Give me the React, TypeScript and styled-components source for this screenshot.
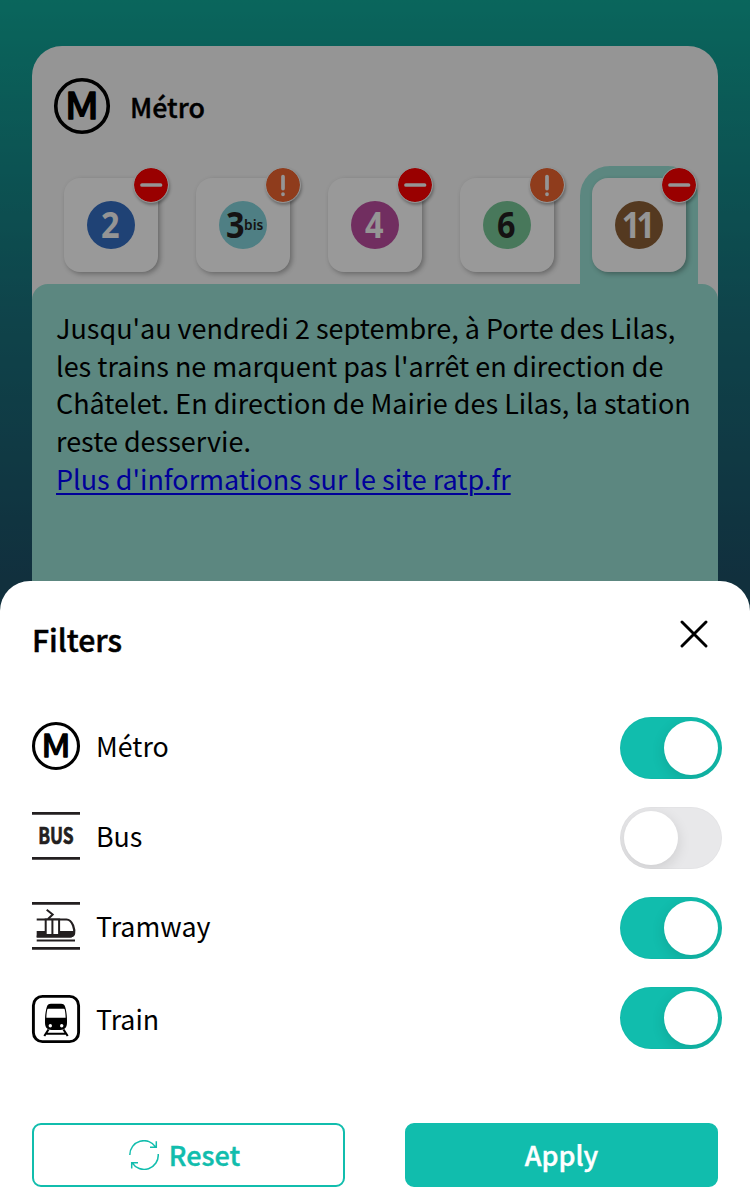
import React, { useState } from 'react';
import styled, { createGlobalStyle } from 'styled-components';

const TEAL = '#11bdad';

const GlobalStyle = createGlobalStyle`
  * { box-sizing: border-box; }
  body {
    margin: 0;
    font-family: "Noto Sans CJK SC", "Noto Sans", sans-serif;
    color: #000;
  }
`;

const Screen = styled.div`
  position: relative;
  width: 750px;
  height: 1198px;
  overflow: hidden;
  padding: 46px 32px 0;
  background: linear-gradient(180deg, #11aa9a 0, #148e8c 150px, #19727d 310px, #1d5067 580px);
`;

const Card = styled.main`
  display: flex;
  flex-direction: column;
  height: 640px;
  border-radius: 30px;
  background: #f8f8f8;
`;

const CardHeader = styled.header`
  display: flex;
  align-items: center;
  height: 120px;
  padding: 0 22px;
  gap: 20px;
`;

const CardTitle = styled.h1`
  margin: 1px 0 0;
  font-size: 26.8px;
  font-weight: 500;
  line-height: 38px;
  -webkit-text-stroke: 0.4px currentColor;
`;

const Tabs = styled.nav`
  display: flex;
  gap: 14px;
  padding: 0 20px;
`;

const Tab = styled.button<{ $selected?: boolean }>`
  display: block;
  width: 118px;
  height: 118px;
  padding: 12px;
  border: 0;
  border-radius: 30px 30px 0 0;
  background: ${(p) => (p.$selected ? '#99e1d5' : 'transparent')};
`;

const Tile = styled.span`
  position: relative;
  display: flex;
  align-items: center;
  justify-content: center;
  width: 94px;
  height: 94px;
  border-radius: 16px;
  background: #fff;
  box-shadow: 2px 2px 5px rgba(0, 0, 0, 0.3);
`;

const LineDisc = styled.span<{ $bg: string; $fg: string }>`
  display: flex;
  align-items: center;
  justify-content: center;
  width: 48px;
  height: 48px;
  border-radius: 50%;
  background: ${(p) => p.$bg};
  color: ${(p) => p.$fg};
  font: 700 36px/48px "Noto Sans", sans-serif;
`;

const LineNumber = styled.span<{ $tight?: boolean }>`
  transform: scaleX(0.9);
  letter-spacing: ${(p) => (p.$tight ? '-4px' : '0')};
  margin-left: ${(p) => (p.$tight ? '-4px' : '-1px')};
`;

const LineSuffix = styled.span`
  margin: -3px -5px 0 -1px;
  font-size: 15px;
  font-weight: 600;
  line-height: 20px;
  transform: scaleX(0.92);
  transform-origin: left;
`;

const Badge = styled.span<{ $color: string }>`
  position: absolute;
  top: -11px;
  right: -11px;
  width: 36px;
  height: 36px;
  border: 1.5px solid #f8f8f8;
  border-radius: 50%;
  background: ${(p) => p.$color};
  background-clip: padding-box;
  box-shadow: 1px 2px 3px rgba(0, 0, 0, 0.3);

  svg { display: block; width: 100%; height: 100%; }
`;

const Message = styled.section`
  flex: 1;
  padding: 25px 24px;
  border-radius: 16px 16px 0 0;
  background: #99e1d5;
`;

const MessageLine = styled.div`
  height: 37.7px;
  font-size: 26.98px;
  line-height: 37.7px;
  white-space: nowrap;
`;

const MoreLink = styled.a`
  color: #0000ff;
  text-decoration: underline;
  text-decoration-thickness: 2px;
  text-underline-offset: 3px;
`;

const Backdrop = styled.div`
  position: absolute;
  inset: 0;
  background: rgba(0, 0, 0, 0.4);
`;

const Sheet = styled.section`
  position: absolute;
  left: 0;
  right: 0;
  top: 581px;
  bottom: 0;
  display: flex;
  flex-direction: column;
  padding: 40px 32px 0;
  border-radius: 30px 30px 0 0;
  background: #fff;
`;

const SheetHeader = styled.header`
  display: flex;
  justify-content: space-between;
  height: 80px;
`;

const SheetTitle = styled.h2`
  margin: -2px 0 0;
  font-size: 30.200px;
  font-weight: 500;
  line-height: 40px;
  -webkit-text-stroke: 0.5px currentColor;
`;

const CloseButton = styled.button`
  width: 28px;
  height: 28px;
  margin: -1px 10.500px 0 0;
  padding: 0;
  border: 0;
  background: none;

  svg { display: block; }
`;

const FilterList = styled.div`
  display: flex;
  flex-direction: column;
  height: 361.2px;
`;

const FilterRow = styled.div<{ $shift?: number }>`
  display: flex;
  align-items: center;
  height: 90.15px;
  margin-right: -4px;

  > svg { flex: none; margin-top: ${(p) => p.$shift ?? 0}px; }
  > span { margin-top: ${(p) => p.$shift ?? 0}px; }
`;

const FilterLabel = styled.span`
  flex: 1;
  padding-left: 16px;
  font-size: 26.8px;
  line-height: 38px;
`;

const Toggle = styled.button<{ $on: boolean }>`
  display: flex;
  align-items: center;
  justify-content: ${(p) => (p.$on ? 'flex-end' : 'flex-start')};
  width: 102px;
  height: 62px;
  margin-top: 3px;
  padding: 0 4px;
  overflow: hidden;
  border: 0;
  border-radius: 31px;
  background: ${(p) => (p.$on ? TEAL : '#e8e8ea')};
  box-shadow: inset 0 0 0 1px rgba(0, 0, 0, 0.02);
`;

const Knob = styled.span`
  width: 54px;
  height: 54px;
  border-radius: 50%;
  background: #fff;
  box-shadow: 0 4px 14px rgba(0, 0, 0, 0.12);
`;

const Actions = styled.footer`
  display: grid;
  grid-template-columns: 313px 313px;
  justify-content: space-between;
  margin-top: 61px;
`;

const ActionButton = styled.button<{ $primary?: boolean }>`
  display: flex;
  align-items: center;
  justify-content: center;
  gap: 10px;
  height: 64px;
  padding: 0 ${(p) => (p.$primary ? 0 : 8)}px 0 0;
  border: 2px solid ${TEAL};
  border-radius: 9px;
  background: ${(p) => (p.$primary ? TEAL : '#fff')};
  color: ${(p) => (p.$primary ? '#fff' : TEAL)};
  font: 500 27px/38px "Noto Sans CJK SC", sans-serif;
  -webkit-text-stroke: 0.4px currentColor;

  svg { margin-top: -1px; }
`;

const LogoSvg = styled.svg`
  display: block;
  overflow: visible;
`;

const MetroLogo = ({ size }: { size: number }) => (
  <LogoSvg width={size} height={size} viewBox="0 0 48 48">
    <circle cx="24" cy="24" r="22.5" fill="none" stroke="#000" strokeWidth="3.100" />
    <text
      x="0" y="35.3" textAnchor="middle" transform="translate(24 0) scale(1.17 1)"
      fontFamily="Noto Sans CJK SC, sans-serif" fontWeight="400" fontSize="31"
      stroke="#000" strokeWidth="1.300" strokeLinejoin="round"
    >M</text>
  </LogoSvg>
);

const BusLogo = () => (
  <LogoSvg width="48" height="48" viewBox="0 0 48 48">
    <path d="M0 1.4h48M0 46.4h48" stroke="#231f20" strokeWidth="2.8" />
    <text
      x="6.2" y="31.8" textLength="35.5" lengthAdjust="spacingAndGlyphs"
      fontFamily="Noto Sans CJK SC, sans-serif" fontWeight="700" fontSize="22.5"
      fill="#231f20" stroke="#231f20" strokeWidth="0.7"
    >BUS</text>
  </LogoSvg>
);

const TramLogo = () => (
  <LogoSvg width="48" height="48" viewBox="0 0 48 48" fill="none" stroke="#231f20">
    <path d="M0 1.4h48M0 46.4h48" strokeWidth="2.8" />
    <path d="M4.7 38.5H43" strokeWidth="2" />
    <path d="M4.7 17.5H34.500c3.500 0 5.200 2.500 6.600 6 1.100 3 1.500 5.500 1 8-.5 2-1.800 3-4.300 3H4.700" strokeWidth="2.200" />
    <path d="M4.700 29H42.900c.3 4-1.200 6.500-5 6.500H4.700z" fill="#231f20" stroke="none" />
    <path d="M13.700 17.500v15.500h13.400V17.500z" fill="#fff" strokeWidth="2" />
    <path d="M20.400 17.500v15.500" strokeWidth="2" />
    <path d="M14.700 7.700l6 4.800-4.700 4.500" strokeWidth="2" />
  </LogoSvg>
);

const TrainLogo = () => (
  <LogoSvg width="48" height="48" viewBox="0 0 48 48">
    <rect x="1.400" y="1.400" width="45.200" height="45.200" rx="9" fill="none" stroke="#000" strokeWidth="2.900" />
    <path d="M19 8.800h10c2.500 0 3.500 1 4.200 3.200 1.300 4.500 1.900 9 1.800 15.500 0 4.700-2.200 7.500-6.500 7.500h-9c-4.300 0-6.500-2.800-6.500-7.500-.1-6.500.5-11 1.800-15.500.7-2.200 1.700-3.200 4.200-3.200z" />
    <path d="M16.200 13.800h15.600c.6 0 .9.300 1 .9.5 2.800.8 5.100.8 8H14.400c0-2.900.3-5.200.8-8 .1-.6.4-.9 1-.9z" fill="#fff" />
    <circle cx="18.300" cy="30.800" r="1.700" fill="#fff" />
    <circle cx="29.700" cy="30.800" r="1.700" fill="#fff" />
    <path d="M16.500 34.500L12.300 41M31.500 34.500L35.700 41M14.500 38.800h19" stroke="#000" strokeWidth="2.100" />
  </LogoSvg>
);

const CloseIcon = () => (
  <svg width="28" height="28" viewBox="0 0 28 28">
    <path d="M2 2l24 24M26 2L2 26" stroke="#000" strokeWidth="2.900" strokeLinecap="round" />
  </svg>
);

const ResetIcon = () => (
  <svg width="30" height="30" viewBox="0 0 30 30" fill="none" stroke={TEAL} strokeWidth="1.500">
    <path d="M.8 15A14.200 14.200 0 0 1 27 7.300M27.300 1.300v6h-6.300M29.200 14A14.200 14.200 0 0 1 3 22.700M2.700 28.500v-5.800H9" />
  </svg>
);

const BadgeIcon = ({ kind }: { kind: 'stop' | 'warn' }) => (
  <svg viewBox="0 0 34 34" stroke="#f8f8f8" strokeWidth="3.700" strokeLinecap="round">
    {kind === 'stop' ? <path d="M8 17h18.500" /> : <path d="M17 8.600v12M17 26.100v.2" />}
  </svg>
);

type Line = { name: string; suffix?: string; bg: string; fg: string; badge: 'stop' | 'warn' };

const LINES: Line[] = [
  { name: '2', bg: '#346ec3', fg: '#f8f8f8', badge: 'stop' },
  { name: '3', suffix: 'bis', bg: '#84d4dc', fg: '#231f20', badge: 'warn' },
  { name: '4', bg: '#bd4ea0', fg: '#f8f8f8', badge: 'stop' },
  { name: '6', bg: '#78c898', fg: '#231f20', badge: 'warn' },
  { name: '11', bg: '#8c6036', fg: '#f8f8f8', badge: 'stop' },
];

const FILTERS = [
  { label: 'Métro', icon: <MetroLogo size={48} />, on: true, shift: 0 },
  { label: 'Bus', icon: <BusLogo />, on: false, shift: 0 },
  { label: 'Tramway', icon: <TramLogo />, on: true, shift: 0 },
  { label: 'Train', icon: <TrainLogo />, on: true, shift: 5 },
];

export default function App() {
  const [enabled, setEnabled] = useState(FILTERS.map((f) => f.on));
  const [selected, setSelected] = useState('11');

  return (
    <>
      <GlobalStyle />
      <Screen>
        <Card>
          <CardHeader>
            <MetroLogo size={56} />
            <CardTitle>Métro</CardTitle>
          </CardHeader>
          <Tabs>
            {LINES.map((line) => (
              <Tab key={line.name} $selected={line.name === selected} onClick={() => setSelected(line.name)}>
                <Tile>
                  <LineDisc $bg={line.bg} $fg={line.fg}>
                    <LineNumber $tight={line.name.length > 1}>{line.name}</LineNumber>
                    {line.suffix && <LineSuffix>{line.suffix}</LineSuffix>}
                  </LineDisc>
                  <Badge $color={line.badge === 'stop' ? '#ff0000' : '#ee6530'}>
                    <BadgeIcon kind={line.badge} />
                  </Badge>
                </Tile>
              </Tab>
            ))}
          </Tabs>
          <Message>
            <MessageLine>Jusqu'au vendredi 2 septembre, à Porte des Lilas,</MessageLine>
            <MessageLine>les trains ne marquent pas l'arrêt en direction de</MessageLine>
            <MessageLine>Châtelet. En direction de Mairie des Lilas, la station</MessageLine>
            <MessageLine>reste desservie.</MessageLine>
            <MessageLine><MoreLink>Plus d'informations sur le site ratp.fr</MoreLink></MessageLine>
          </Message>
        </Card>
        <Backdrop />
        <Sheet>
          <SheetHeader>
            <SheetTitle>Filters</SheetTitle>
            <CloseButton aria-label="Close"><CloseIcon /></CloseButton>
          </SheetHeader>
          <FilterList>
            {FILTERS.map((filter, i) => (
              <FilterRow key={filter.label} $shift={filter.shift}>
                {filter.icon}
                <FilterLabel>{filter.label}</FilterLabel>
                <Toggle
                  $on={enabled[i]}
                  aria-label={filter.label}
                  onClick={() => setEnabled(enabled.map((v, j) => (j === i ? !v : v)))}
                >
                  <Knob />
                </Toggle>
              </FilterRow>
            ))}
          </FilterList>
          <Actions>
            <ActionButton><ResetIcon />Reset</ActionButton>
            <ActionButton $primary>Apply</ActionButton>
          </Actions>
        </Sheet>
      </Screen>
    </>
  );
}
